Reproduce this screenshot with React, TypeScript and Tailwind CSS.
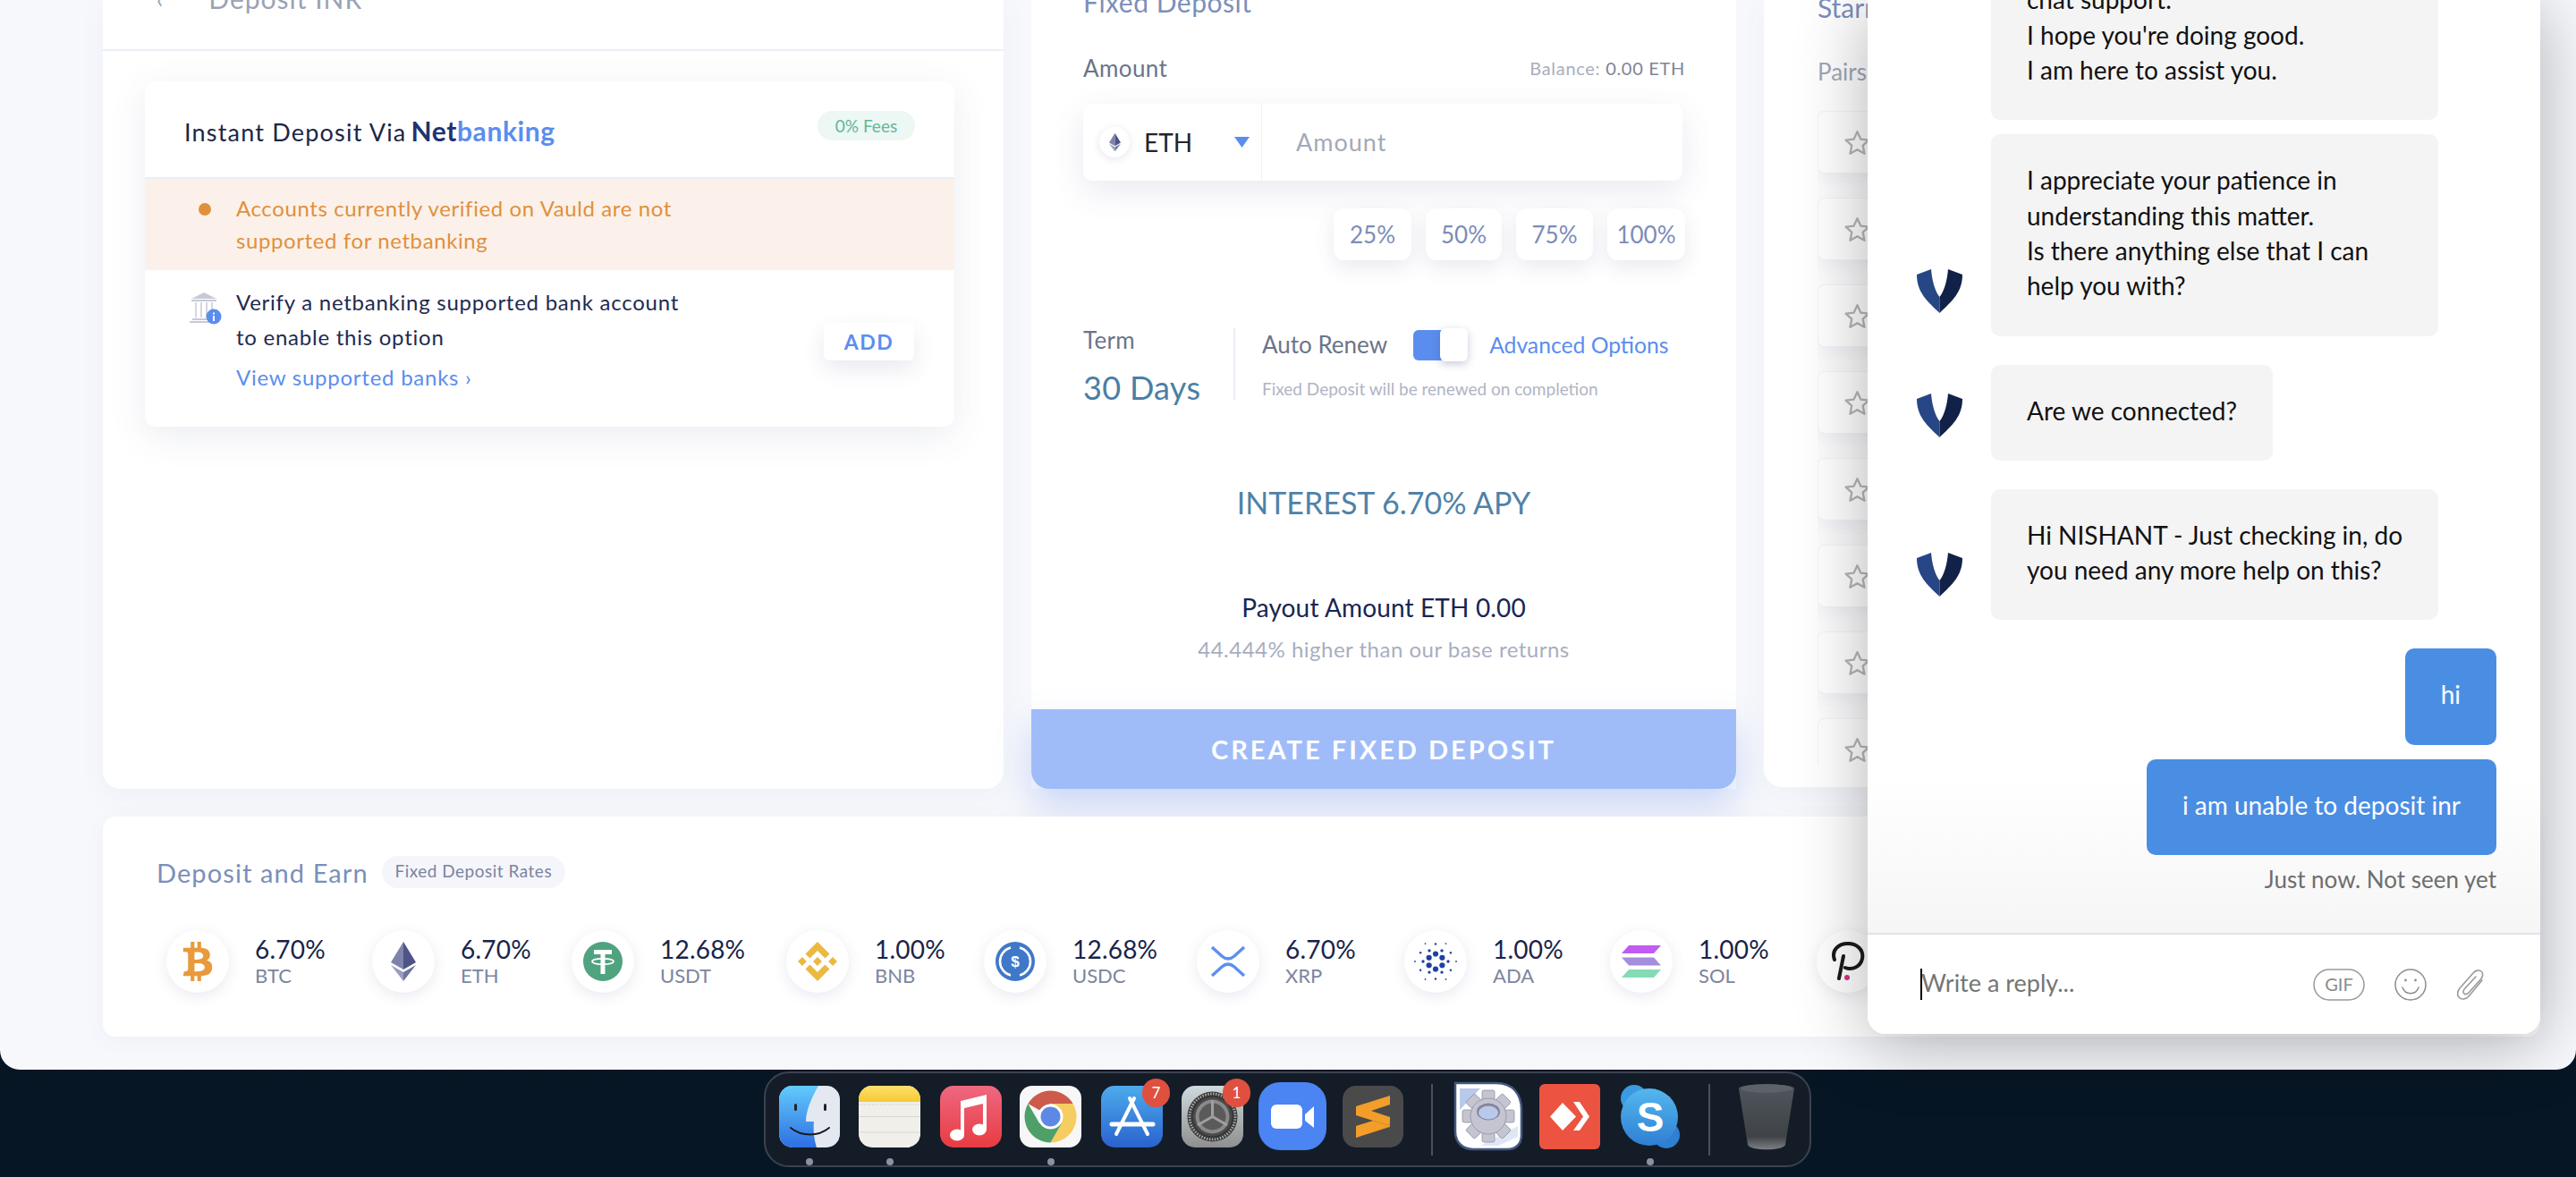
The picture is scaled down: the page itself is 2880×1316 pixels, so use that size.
import React from "react";
import { SiBinance } from "react-icons/si";
import { FaBtc } from "react-icons/fa";

const EthMark = ({ className = "" }: { className?: string }) => (
  <svg viewBox="0 0 28 44" className={className}>
    <polygon points="14,0 0,23 14,31" fill="#7f83ab" />
    <polygon points="14,0 28,23 14,31" fill="#4f5486" />
    <polygon points="0,26 14,34 14,44" fill="#9a9dc0" />
    <polygon points="28,26 14,34 14,44" fill="#6f73a0" />
  </svg>
);

const Tether = () => (
  <svg viewBox="0 0 44 44" className="w-[44px] h-[44px]">
    <circle cx="22" cy="22" r="22" fill="#50a37f" />
    <path d="M12 9h20v5h-7.500v22h-5V14H12z" fill="#fff" />
    <ellipse cx="22" cy="22" rx="12" ry="3.200" fill="none" stroke="#fff" strokeWidth="1.800" />
  </svg>
);

const Usdc = () => (
  <svg viewBox="0 0 44 44" className="w-[44px] h-[44px]">
    <circle cx="22" cy="22" r="22" fill="#3f78c8" />
    <path d="M17 6.500a16 16 0 0 0 0 31M27 6.500a16 16 0 0 1 0 31" stroke="#fff" strokeWidth="2.600" fill="none" />
    <text x="22" y="28" textAnchor="middle" fontSize="17" fontWeight="700" fill="#fff" fontFamily="Liberation Sans, sans-serif">$</text>
  </svg>
);

const Xrp = () => (
  <svg viewBox="0 0 40 34" className="w-[40px] h-[34px]">
    <path d="M2 1 13 11Q20 17 27 11L38 1" fill="none" stroke="#5b8ff0" strokeWidth="3.400" />
    <path d="M2 33 13 23Q20 17 27 23L38 33" fill="none" stroke="#5b8ff0" strokeWidth="3.400" />
  </svg>
);

const Ada = () => {
  const dots: { x: number; y: number; r: number }[] = [];
  const rings: [number, number, number, number][] = [
    [6, 8.500, 3.100, 30],
    [6, 14, 1.700, 0],
    [6, 19.500, 1.200, 30],
    [6, 23, 0.900, 0],
  ];
  rings.forEach(([n, rad, r, off]) => {
    for (let i = 0; i < n; i++) {
      const a = ((i * 60 + off) * Math.PI) / 180;
      dots.push({ x: 24 + rad * Math.cos(a), y: 24 + rad * Math.sin(a), r });
    }
  });
  return (
    <svg viewBox="0 0 48 48" className="w-[48px] h-[48px]">
      {dots.map((d, i) => (
        <circle key={i} cx={d.x} cy={d.y} r={d.r} fill="#1f3fa8" />
      ))}
    </svg>
  );
};

const Sol = () => (
  <svg viewBox="0 0 44 36" className="w-[44px] h-[36px]">
    <polygon points="8,0 44,0 36,9 0,9" fill="#c15cf0" />
    <polygon points="0,13.500 36,13.500 44,22.500 8,22.500" fill="#a58fdc" />
    <polygon points="8,27 44,27 36,36 0,36" fill="#84dbb6" />
  </svg>
);

const Dot = () => (
  <svg viewBox="0 0 40 44" className="w-[40px] h-[44px]">
    <path d="M5 20C1 9 10 2 20 2c10 0 18 7 16 17-2 9-11 13-19 10M15 16l-5 25" fill="none" stroke="#1b1b1b" strokeWidth="4" strokeLinecap="round" />
    <circle cx="19" cy="40" r="3" fill="#d6337f" />
  </svg>
);

const coins = [
  { rate: "6.70%", sym: "BTC", cls: "w-[230px]", icon: <FaBtc className="w-[36px] h-[44px] text-[#e89a3c]" /> },
  { rate: "6.70%", sym: "ETH", cls: "w-[223px]", icon: <EthMark className="w-[28px] h-[44px]" /> },
  { rate: "12.68%", sym: "USDT", cls: "w-[240px]", icon: <Tether /> },
  { rate: "1.00%", sym: "BNB", cls: "w-[221px]", icon: <SiBinance className="w-[44px] h-[44px] text-[#ecb93f]" /> },
  { rate: "12.68%", sym: "USDC", cls: "w-[238px]", icon: <Usdc /> },
  { rate: "6.70%", sym: "XRP", cls: "w-[232px]", icon: <Xrp /> },
  { rate: "1.00%", sym: "ADA", cls: "w-[230px]", icon: <Ada /> },
  { rate: "1.00%", sym: "SOL", cls: "w-[231px]", icon: <Sol /> },
  { rate: "", sym: "", cls: "w-[100px]", icon: <Dot /> },
];

const Star = () => (
  <svg viewBox="0 0 24 24" className="w-[31px] h-[31px]" fill="none" stroke="#b6b6ba" strokeWidth="1.800" strokeLinejoin="round">
    <polygon points="12,2.500 15,9 22,9.800 16.800,14.500 18.200,21.500 12,18 5.800,21.500 7.200,14.500 2,9.800 9,9" />
  </svg>
);

const Vee = () => (
  <svg viewBox="0 0 51 49" className="w-[51px] h-[49px] shrink-0 mb-[26px]">
    <path d="M0 6 16 0c1 12 4 24 9.500 31V49C12 36 0 26 0 6z" fill="#274685" />
    <path d="M51 6 35 0c-1 12-4 24-9.500 31V49C39 36 51 26 51 6z" fill="#122147" />
  </svg>
);

const BankIcon = () => (
  <svg viewBox="0 0 36 36" className="w-[36px] h-[36px] shrink-0">
    <polygon points="16,0 30,7 2,7" fill="#c6cad6" />
    <rect x="2" y="8" width="28" height="2" fill="#c6cad6" />
    <rect x="6" y="11" width="2" height="17" fill="#d4d7e0" />
    <rect x="12" y="11" width="2" height="17" fill="#d4d7e0" />
    <rect x="18" y="11" width="2" height="17" fill="#d4d7e0" />
    <rect x="24" y="11" width="2" height="12" fill="#d4d7e0" />
    <rect x="3" y="29" width="20" height="2" fill="#c6cad6" />
    <rect x="0" y="32" width="22" height="2" fill="#c6cad6" />
    <circle cx="27" cy="27" r="8.500" fill="#5b8def" />
    <rect x="26" y="26" width="2" height="6" fill="#fff" />
    <rect x="26" y="22.500" width="2" height="2" fill="#fff" />
  </svg>
);

const Finder = () => (
  <svg viewBox="0 0 68 69" className="w-[68px] h-[69px]">
    <defs>
      <linearGradient id="fd" x1="0" y1="0" x2="0" y2="1">
        <stop offset="0" stopColor="#62cbfb" />
        <stop offset="1" stopColor="#2e6fe3" />
      </linearGradient>
      <clipPath id="fc"><rect width="68" height="69" rx="15" /></clipPath>
    </defs>
    <g clipPath="url(#fc)">
      <rect width="68" height="69" fill="#e4e9f1" />
      <path d="M0 0H44C36 14 30 28 30 40h9c-1 10 0 20 3 29H0z" fill="url(#fd)" />
    </g>
    <rect x="17" y="20" width="3" height="8" rx="1.500" fill="#222" />
    <rect x="50" y="20" width="3" height="8" rx="1.500" fill="#222" />
    <path d="M13 47c12 10 31 10 43 0" fill="none" stroke="#1c1c1c" strokeWidth="2" strokeLinecap="round" />
  </svg>
);

const Notes = () => (
  <svg viewBox="0 0 69 69" className="w-[69px] h-[69px]">
    <defs>
      <linearGradient id="nt" x1="0" y1="0" x2="0" y2="1">
        <stop offset="0" stopColor="#fde06a" />
        <stop offset="1" stopColor="#f7c935" />
      </linearGradient>
      <clipPath id="nc"><rect width="69" height="69" rx="15" /></clipPath>
    </defs>
    <g clipPath="url(#nc)">
      <rect width="69" height="69" fill="#f0efe9" />
      <rect width="69" height="18" fill="url(#nt)" />
      <line x1="0" y1="21" x2="69" y2="21" stroke="#c9c8c3" strokeWidth="1" strokeDasharray="1.500 1.500" />
      <line x1="0" y1="34.500" x2="69" y2="34.500" stroke="#d8d7d2" strokeWidth="1" />
      <line x1="0" y1="52" x2="69" y2="52" stroke="#d8d7d2" strokeWidth="1" />
    </g>
  </svg>
);

const Music = () => (
  <svg viewBox="0 0 69 69" className="w-[69px] h-[69px]">
    <defs>
      <linearGradient id="mu" x1="0" y1="0" x2="0" y2="1">
        <stop offset="0" stopColor="#ee6880" />
        <stop offset="1" stopColor="#e83b42" />
      </linearGradient>
    </defs>
    <rect width="69" height="69" rx="15" fill="url(#mu)" />
    <path d="M25 19v36M50 11v37" fill="none" stroke="#fff" strokeWidth="4" />
    <polygon points="23,17 52,10 52,19 23,26" fill="#fff" />
    <ellipse cx="19" cy="55" rx="8" ry="6.500" fill="#fff" />
    <ellipse cx="44" cy="49" rx="8" ry="6.500" fill="#fff" />
  </svg>
);

const Chrome = () => (
  <svg viewBox="0 0 69 69" className="w-[69px] h-[69px]">
    <rect width="69" height="69" rx="14" fill="#f7f7f7" />
    <path d="M9.400 20A29 29 0 0 1 59.600 20H34.500L22 27.300Z" fill="#cd5b4c" />
    <path d="M59.600 20A29 29 0 0 1 34.500 63.500L47 41.800V27.300L34.500 20Z" fill="#f5cd60" />
    <path d="M9.400 20A29 29 0 0 0 34.500 63.500L47 41.800H22Z" fill="#4f9f68" />
    <circle cx="34.500" cy="34.500" r="14" fill="#fff" />
    <circle cx="34.500" cy="34.500" r="11" fill="#5d88e6" />
  </svg>
);

const AppStore = () => (
  <svg viewBox="0 0 69 69" className="w-[69px] h-[69px]">
    <defs>
      <linearGradient id="as" x1="0" y1="0" x2="0" y2="1">
        <stop offset="0" stopColor="#4dabec" />
        <stop offset="1" stopColor="#2a62cf" />
      </linearGradient>
    </defs>
    <rect width="69" height="69" rx="15" fill="url(#as)" />
    <g stroke="#fff" strokeLinecap="round" fill="none">
      <path d="M37 14 17 54" strokeWidth="4" />
      <path d="M32 14 52 54" strokeWidth="4" />
      <path d="M12 43h46" strokeWidth="5" />
    </g>
  </svg>
);

const Prefs = () => (
  <svg viewBox="0 0 69 69" className="w-[69px] h-[69px]">
    <defs>
      <linearGradient id="pf" x1="0" y1="0" x2="0" y2="1">
        <stop offset="0" stopColor="#cfdade" />
        <stop offset="1" stopColor="#8f8f8f" />
      </linearGradient>
    </defs>
    <rect width="69" height="69" rx="15" fill="url(#pf)" />
    <circle cx="34.500" cy="34.500" r="28" fill="#363636" />
    <circle cx="34.500" cy="34.500" r="25.500" fill="none" stroke="#a8a8a8" strokeWidth="3" strokeDasharray="1.500 1.500" />
    <circle cx="34.500" cy="34.500" r="22" fill="#4a4a4a" />
    <circle cx="34.500" cy="34.500" r="19" fill="#8a8a8a" />
    <circle cx="34.500" cy="34.500" r="15" fill="#5a5a5a" />
    <g stroke="#a0a0a0" strokeWidth="3">
      <path d="M34.500 34.500V16" />
      <path d="M34.500 34.500 18 44" />
      <path d="M34.500 34.500 51 44" />
    </g>
  </svg>
);

const Zoom = () => (
  <svg viewBox="0 0 76 76" className="w-[76px] h-[76px]">
    <rect width="76" height="76" rx="24" fill="#4b84f3" />
    <rect x="14" y="25" width="35" height="27" rx="6" fill="#fff" />
    <polygon points="52,36 62,27 62,51 52,43" fill="#fff" />
  </svg>
);

const Sublime = () => (
  <svg viewBox="0 0 68 69" className="w-[68px] h-[69px]">
    <rect width="68" height="69" rx="15" fill="#4a4a4a" />
    <polygon points="53,11 15,23 15,33 53,45 53,35 32,28 53,21" fill="#f39d2a" />
    <polygon points="53,42 15,54 15,58 53,46" fill="#e08f26" />
    <polygon points="34,39 53,45 15,58 15,45" fill="#f39d2a" />
  </svg>
);

const GearDoc = () => {
  const teeth = [0, 45, 90, 135, 180, 225, 270, 315];
  return (
    <svg viewBox="0 0 78 78" className="w-[78px] h-[78px]">
      <path d="M2 2H48C66 2 76 14 76 32V60C76 70 70 76 60 76H22C10 76 2 68 2 56z" fill="#ffffff" stroke="#44597f" strokeWidth="2.500" />
      <polygon points="7,8 30,8 7,32" fill="#b9c9ec" />
      <polygon points="72,50 72,62 50,72 30,72" fill="#dfe6f6" />
      <g fill="#c4c5d1" stroke="#8f90a4" strokeWidth="0.800">
        {teeth.map((a) => (
          <rect key={a} x="32" y="10" width="14" height="14" rx="2" transform={`rotate(${a} 39 39)`} />
        ))}
        <circle cx="39" cy="39" r="20" />
      </g>
      <ellipse cx="39" cy="34" rx="13" ry="9.500" fill="#85869a" />
      <ellipse cx="39" cy="35" rx="11" ry="7.500" fill="#b9c9ec" />
    </svg>
  );
};

const AnyDesk = () => (
  <svg viewBox="0 0 68 73" className="w-[68px] h-[73px]">
    <rect width="68" height="73" rx="6" fill="#ec5341" />
    <polygon points="26,21 41,36.500 26,52 12,36.500" fill="#fff" />
    <polygon points="38,20 45,20 56,36.500 45,52 38,52 49,36.500" fill="#fff" />
  </svg>
);

const Skype = () => (
  <svg viewBox="0 0 68 73" className="w-[68px] h-[73px]">
    <defs>
      <linearGradient id="sk" x1="0" y1="0" x2="0" y2="1">
        <stop offset="0" stopColor="#54b7ee" />
        <stop offset="1" stopColor="#2f7fd3" />
      </linearGradient>
    </defs>
    <circle cx="16" cy="16" r="15" fill="#3b9be0" />
    <circle cx="52" cy="57" r="15" fill="#2f7fd3" />
    <circle cx="33" cy="37" r="32" fill="url(#sk)" />
    <text x="34" y="53" textAnchor="middle" fontSize="46" fontWeight="700" fill="#fff" fontFamily="Liberation Sans, sans-serif">S</text>
  </svg>
);

const Trash = () => (
  <svg viewBox="0 0 62 76" className="w-[62px] h-[76px]">
    <defs>
      <linearGradient id="tr" x1="0" y1="0" x2="0" y2="1">
        <stop offset="0" stopColor="#50565d" />
        <stop offset="0.800" stopColor="#3f4347" />
        <stop offset="1" stopColor="#7d8083" />
      </linearGradient>
    </defs>
    <path d="M0 7C0 1 62 1 62 7L52 70C50 77 12 77 10 70Z" fill="url(#tr)" />
    <ellipse cx="31" cy="7" rx="29" ry="5" fill="#5c6269" />
  </svg>
);

const DockItem = ({ cls, dot, badge, children }: { cls: string; dot?: boolean; badge?: string; children: React.ReactNode }) => (
  <div className={`relative h-[78px] flex items-center justify-center shrink-0 ${cls}`}>
    {children}
    {badge && (
      <span className="absolute -top-[3px] -right-[8px] w-[31px] h-[32px] rounded-full bg-[#e0503f] text-white text-[17px] leading-[32px] text-center">
        {badge}
      </span>
    )}
    {dot && <span className="absolute top-[86px] left-1/2 -ml-[4px] w-[8px] h-[8px] rounded-full bg-[#8b93a0]" />}
  </div>
);

const pairRows = [0, 1, 2, 3, 4, 5, 6, 7];

const Bubble = ({ cls, children }: { cls: string; children: React.ReactNode }) => (
  <div className={`rounded-[10px] pt-[32px] pb-[36px] px-[40px] text-[28px] leading-[39.3px] whitespace-nowrap ${cls}`}>{children}</div>
);

export default function App() {
  return (
    <div className="relative w-[2880px] h-[1316px] overflow-hidden font-[Lato,sans-serif] bg-[linear-gradient(to_bottom,#000000_0,#06121e_40px,#071624_100%)]">
      <div className="w-full h-[1196px] overflow-hidden rounded-b-[22px] bg-[#f7f8fc] pl-[115px]">
        <div className="flex h-[882px] items-start gap-[31px]">
          {/* Left panel */}
          <section className="w-[1007px] h-full rounded-b-[20px] bg-white shadow-[0_8px_30px_rgba(90,100,160,0.05)]">
            <div className="h-[57px] border-b-[2px] border-[#ebeff5] flex items-start pl-[60px]">
              <span className="-mt-[16px] text-[#9aa3b5] text-[26px] leading-[30px]">‹</span>
              <span className="-mt-[19px] ml-[51px] text-[#9aa3b5] text-[30px] leading-[34px] tracking-[1px]">Deposit INR</span>
            </div>
            <div className="ml-[47px] mt-[34px] w-[905px] h-[386px] rounded-[12px] bg-white overflow-hidden shadow-[0_10px_40px_rgba(70,80,130,0.10)]">
              <div className="h-[107px] flex items-center justify-between pl-[44px] pr-[44px]">
                <div className="text-[27px] text-[#1c2646] flex items-baseline tracking-[1.2px] pt-[4px]">
                  Instant Deposit Via
                  <span className="ml-[5px] text-[30px] font-bold tracking-[0.6px] text-[#1e3370]">Net</span>
                  <span className="text-[30px] font-bold tracking-[0.6px] text-[#5b8def]">banking</span>
                </div>
                <span className="-mt-[8px] h-[33px] w-[109px] rounded-full bg-[#edf7f4] text-[#5fb89a] text-[19px] leading-[33px] text-center">0% Fees</span>
              </div>
              <div className="h-[104px] border-t-[2px] border-[#e9eff5] bg-[#fbf1ea] flex items-start pl-[60px] pt-[15px]">
                <span className="w-[14px] h-[14px] mt-[12px] rounded-full bg-[#e0903c] shrink-0" />
                <p className="ml-[28px] text-[24px] leading-[36px] tracking-[0.6px] text-[#e0903c]">
                  Accounts currently verified on Vauld are not
                  <br />
                  supported for netbanking
                </p>
              </div>
              <div className="flex items-start justify-between pl-[50px] pr-[45px] pt-[16px]">
                <div className="flex items-start gap-[16px]">
                  <div className="mt-[9px]">
                    <BankIcon />
                  </div>
                  <div>
                    <p className="text-[24px] leading-[39px] tracking-[0.75px] text-[#1e2a50]">
                      Verify a netbanking supported bank account
                      <br />
                      to enable this option
                    </p>
                    <p className="mt-[8px] text-[24px] leading-[36px] tracking-[0.75px] text-[#5b8def]">View supported banks ›</p>
                  </div>
                </div>
                <button className="mt-[43px] w-[101px] h-[42px] rounded-[6px] bg-white text-[#5b8def] text-[23px] font-bold tracking-[1.5px] shadow-[0_10px_24px_rgba(70,80,130,0.12)]">ADD</button>
              </div>
            </div>
          </section>

          {/* Fixed deposit */}
          <section className="w-[788px] h-full flex flex-col bg-white">
            <div className="pl-[58px] pr-[57px]">
              <h2 className="-mt-[18px] h-[40px] text-[30px] leading-[40px] tracking-[0.5px] text-[#7a8fbb] font-normal">Fixed Deposit</h2>
              <div className="mt-[36px] w-[673px] h-[36px] flex items-center justify-between">
                <span className="text-[26px] tracking-[0.4px] text-[#6b7489]">Amount</span>
                <span className="text-[20px] tracking-[0.7px] text-[#a8adbd]">
                  Balance: <span className="text-[#7d8496]">0.00 ETH</span>
                </span>
              </div>
              <div className="mt-[22px] w-[670px] h-[86px] flex rounded-[10px] bg-white shadow-[0_12px_36px_rgba(70,80,130,0.12)]">
                <div className="w-[200px] h-full border-r border-[#f0f1f6] flex items-center pl-[18px]">
                  <span className="w-[34px] h-[34px] rounded-full bg-white flex items-center justify-center shadow-[0_2px_10px_rgba(70,80,130,0.14)]">
                    <EthMark className="w-[13px] h-[22px]" />
                  </span>
                  <span className="ml-[16px] text-[28px] text-[#23252c]">ETH</span>
                  <svg viewBox="0 0 17 12" className="ml-[47px] w-[17px] h-[12px]">
                    <polygon points="0,0 17,0 8.500,12" fill="#5b8def" />
                  </svg>
                </div>
                <div className="flex items-center pl-[38px] text-[27px] tracking-[1px] text-[#a3a9b9]">Amount</div>
              </div>
              <div className="mt-[31px] flex justify-end gap-[16px]">
                {[
                  { t: "25%", c: "w-[87px]" },
                  { t: "50%", c: "w-[85px]" },
                  { t: "75%", c: "w-[86px]" },
                  { t: "100%", c: "w-[87px]" },
                ].map((p) => (
                  <button key={p.t} className={`h-[58px] rounded-[12px] bg-white text-[26px] text-[#7b8cb8] shadow-[0_8px_22px_rgba(70,80,130,0.12)] ${p.c}`}>
                    {p.t}
                  </button>
                ))}
              </div>
              <div className="mt-[76px] h-[80px] flex">
                <div className="w-[170px] border-r-[2px] border-[#e9eef5]">
                  <div className="text-[26px] leading-[27px] tracking-[0.3px] text-[#6b7489]">Term</div>
                  <div className="mt-[19px] text-[36px] leading-[40px] tracking-[0.3px] text-[#4a7fa5]">30 Days</div>
                </div>
                <div className="pl-[30px]">
                  <div className="h-[37px] flex items-center">
                    <span className="text-[26px] text-[#6b7489]">Auto Renew</span>
                    <span className="ml-[29px] relative w-[61px] h-[34px] rounded-[6px] bg-[#5b8def]">
                      <span className="absolute -top-[2px] right-0 w-[31px] h-[37px] rounded-[6px] bg-white shadow-[0_3px_10px_rgba(70,80,130,0.3)]" />
                    </span>
                    <span className="ml-[24px] text-[24.7px] text-[#5b8def]">Advanced Options</span>
                  </div>
                  <div className="mt-[18px] text-[19px] leading-[26px] text-[#b0b4c4]">Fixed Deposit will be renewed on completion</div>
                </div>
              </div>
            </div>
            <div className="mt-[95px] text-center text-[34px] leading-[40px] text-[#4f82a8]">INTEREST 6.70% APY</div>
            <div className="mt-[79px] text-center text-[28px] leading-[36px] tracking-[0.15px] text-[#1a2550]">Payout Amount ETH 0.00</div>
            <div className="mt-[14px] text-center text-[24px] leading-[30px] tracking-[0.5px] text-[#a8aec0]">44.444% higher than our base returns</div>
            <button className="mt-auto h-[89px] w-full rounded-b-[20px] bg-[#9fbcf9] text-white text-[29px] font-bold tracking-[3px] shadow-[0_20px_40px_rgba(90,130,230,0.28)]">CREATE FIXED DEPOSIT</button>
          </section>

          {/* Starred */}
          <section className="w-[840px] h-[880px] rounded-b-[20px] bg-white pl-[60px] pr-[40px] shadow-[0_8px_30px_rgba(90,100,160,0.05)]">
            <h2 className="-mt-[12px] h-[40px] text-[30px] leading-[40px] text-[#7a8fbb] font-normal">Starred Pairs</h2>
            <div className="mt-[34px] h-[36px] text-[26px] leading-[36px] text-[#a0a6b6]">Pairs</div>
            <div className="mt-[26px] h-[731px] overflow-hidden flex flex-col gap-[27px]">
              {pairRows.map((r) => (
                <div key={r} className="h-[70px] shrink-0 rounded-[8px] bg-white border border-[#f3f4f8] flex items-center pl-[28px] shadow-[0_10px_24px_rgba(50,60,110,0.08)]">
                  <Star />
                </div>
              ))}
            </div>
          </section>
        </div>

        {/* Deposit and Earn */}
        <section className="relative mt-[31px] w-[2725px] h-[246px] rounded-[14px] bg-white pl-[60px] shadow-[0_4px_24px_rgba(90,100,160,0.05)]">
          <div className="pt-[44px] h-[81px] flex items-start">
            <h3 className="text-[29px] leading-[38px] text-[#7a8fbb] font-normal tracking-[1.1px]">Deposit and Earn</h3>
            <span className="ml-[15px] h-[36px] w-[205px] text-center rounded-full bg-[#f5f6fb] text-[#7b84a0] text-[19px] leading-[34px] tracking-[0.5px]">Fixed Deposit Rates</span>
          </div>
          <div className="ml-[11px] mt-[46px] flex">
            {coins.map((c, i) => (
              <div key={i} className={`flex items-center shrink-0 ${c.cls}`}>
                <div className="w-[70px] h-[70px] rounded-full bg-white flex items-center justify-center shrink-0 shadow-[0_4px_16px_rgba(70,80,130,0.12)]">{c.icon}</div>
                {c.rate && (
                  <div className="ml-[29px]">
                    <div className="text-[28px] leading-[30px] tracking-[0.2px] text-[#18244a]">{c.rate}</div>
                    <div className="text-[22px] leading-[26px] mt-[2px] text-[#7c859e]">{c.sym}</div>
                  </div>
                )}
              </div>
            ))}
          </div>
        </section>
      </div>

      {/* Chat widget */}
      <aside className="absolute top-0 right-[40px] w-[752px] h-[1156px] flex flex-col rounded-b-[20px] bg-white overflow-hidden shadow-[0_10px_80px_rgba(0,0,0,0.3)]">
        <div className="h-[1043px] shrink-0 overflow-hidden flex flex-col justify-end pb-[46px] pl-[55px] pr-[49px] bg-[linear-gradient(to_bottom,#ffffff_83%,#f6f6f6_100%)]">
          <div className="flex flex-col text-[#111]">
            <div className="ml-[83px] w-[500px]">
              <Bubble cls="bg-[#f4f4f4]">
                Hi NISHANT, Welcome to Vauld
                <br />
                chat support.
                <br />
                I hope you're doing good.
                <br />
                I am here to assist you.
              </Bubble>
            </div>
            <div className="mt-[16px] flex items-end gap-[32px]">
              <Vee />
              <div className="w-[500px]">
                <Bubble cls="bg-[#f4f4f4]">
                  I appreciate your patience in
                  <br />
                  understanding this matter.
                  <br />
                  Is there anything else that I can
                  <br />
                  help you with?
                </Bubble>
              </div>
            </div>
            <div className="mt-[32px] flex items-end gap-[32px]">
              <Vee />
              <Bubble cls="bg-[#f4f4f4]">Are we connected?</Bubble>
            </div>
            <div className="mt-[32px] flex items-end gap-[32px]">
              <Vee />
              <div className="w-[500px]">
                <Bubble cls="bg-[#f4f4f4]">
                  Hi NISHANT - Just checking in, do
                  <br />
                  you need any more help on this?
                </Bubble>
              </div>
            </div>
            <div className="mt-[32px] self-end">
              <Bubble cls="bg-[#4a8ee3] text-white">hi</Bubble>
            </div>
            <div className="mt-[16px] self-end">
              <Bubble cls="bg-[#4a8ee3] text-white">i am unable to deposit inr</Bubble>
            </div>
            <div className="mt-[13px] self-end text-[26px] leading-[28px] text-[#6e6e6e]">Just now. Not seen yet</div>
          </div>
        </div>
        <div className="flex-1 border-t-[2px] border-[#e2e3e4] bg-white flex items-center pl-[59px] pr-[61px]">
          <span className="w-[2px] h-[35px] bg-black shrink-0" />
          <span className="-mt-[3px] text-[27px] text-[#757575] -ml-[1px]">Write a reply...</span>
          <svg viewBox="0 0 58 36" className="ml-auto w-[58px] h-[36px]" fill="none">
            <rect x="1" y="1" width="56" height="34" rx="17" stroke="#9a9a9a" strokeWidth="1.500" />
            <text x="29" y="25" textAnchor="middle" fontSize="20" fill="#8a8a8a" fontFamily="Lato, sans-serif">GIF</text>
          </svg>
          <svg viewBox="0 0 36 36" className="ml-[33px] w-[36px] h-[36px]" fill="none" stroke="#8e8e8e" strokeWidth="1.500">
            <circle cx="18" cy="18" r="17" />
            <path d="M9 21c3 9 15 9 18 0" strokeLinecap="round" />
            <circle cx="12.500" cy="13" r="1.400" fill="#8e8e8e" stroke="none" />
            <circle cx="23.500" cy="13" r="1.400" fill="#8e8e8e" stroke="none" />
          </svg>
          <svg viewBox="0 0 32 36" className="ml-[34px] w-[32px] h-[36px]" fill="none" stroke="#9a9a9a" strokeWidth="1.600" strokeLinecap="round">
            <path d="M28 13 13 31c-3 3.500-8 4-10.500 1.500S0 26 3 22L18 5c2.500-3 6.500-4 9-2s2 6-.5 9L13 27c-1.500 1.700-3.500 2-5 1s-1.200-3.500.5-5.500L21 9" />
          </svg>
        </div>
      </aside>

      {/* Dock */}
      <div className="absolute left-[854px] top-[1198px] w-[1171px] h-[107px] rounded-[28px] border-[2px] border-[#3b4350] bg-[#141c28] flex items-start pt-[9px] pl-[15px]">
        <DockItem cls="w-[68px]" dot><Finder /></DockItem>
        <DockItem cls="ml-[21px] w-[69px]" dot><Notes /></DockItem>
        <DockItem cls="ml-[22px] w-[69px]"><Music /></DockItem>
        <DockItem cls="ml-[20px] w-[69px]" dot><Chrome /></DockItem>
        <DockItem cls="ml-[22px] w-[69px]" badge="7"><AppStore /></DockItem>
        <DockItem cls="ml-[21px] w-[69px]" badge="1"><Prefs /></DockItem>
        <DockItem cls="ml-[17px] w-[76px]"><Zoom /></DockItem>
        <DockItem cls="ml-[18px] w-[68px]"><Sublime /></DockItem>
        <span className="ml-[31px] mt-[3px] w-[2px] h-[80px] bg-[#4a515e] shrink-0" />
        <DockItem cls="ml-[23px] w-[78px]"><GearDoc /></DockItem>
        <DockItem cls="ml-[18px] w-[68px]"><AnyDesk /></DockItem>
        <DockItem cls="ml-[22px] w-[68px]" dot><Skype /></DockItem>
        <span className="ml-[31px] mt-[3px] w-[2px] h-[80px] bg-[#4a515e] shrink-0" />
        <DockItem cls="ml-[32px] w-[62px]"><Trash /></DockItem>
      </div>
    </div>
  );
}
